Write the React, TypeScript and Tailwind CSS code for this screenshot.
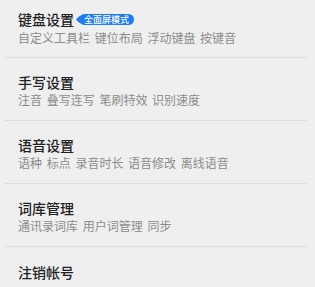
import React from 'react';

const rows = [
  { title: '键盘设置', sub: '自定义工具栏 键位布局 浮动键盘 按键音', badge: '全面屏模式' },
  { title: '手写设置', sub: '注音 叠写连写 笔刷特效 识别速度' },
  { title: '语音设置', sub: '语种 标点 录音时长 语音修改 离线语音' },
  { title: '词库管理', sub: '通讯录词库 用户词管理 同步' },
];

export default function App() {
  return (
    <div
      className="w-[315px] h-[287px] overflow-hidden bg-[#efefef]"
      style={{ fontFamily: '"Noto Sans CJK SC", "Noto Sans", sans-serif' }}
    >
      {rows.map((row, i) => (
        <div key={row.title}>
          <div className={`pl-[18px] pr-4 ${i === 0 ? 'pt-[9px] pb-[11px]' : 'pt-[14px] pb-[12px]'}`}>
            <div className="flex items-center h-[20px]">
              <span className="text-[14px] leading-[20px] font-medium text-[#222]">{row.title}</span>
              {row.badge && (
                <span className="relative ml-[5px] flex items-center">
                  <span className="absolute left-[-2px] top-[3px] w-[5px] h-[5px] rotate-45 bg-[#1d7cf2]" />
                  <span className="relative h-[11px] px-[5px] rounded-full bg-[#1d7cf2] text-white text-[9px] leading-[11px] font-medium">
                    {row.badge}
                  </span>
                </span>
              )}
            </div>
            <div
              className={`h-[16px] text-[12px] leading-[16px] text-[#8c8c8c] whitespace-nowrap [word-spacing:2px] ${
                i === 0 ? 'mt-px' : ''
              }`}
            >
              {row.sub}
            </div>
          </div>
          <div className="h-px ml-1 mr-2 bg-[#dedede]" />
        </div>
      ))}
      <div className="pl-[18px] pt-[12px]">
        <span className="text-[14px] leading-[20px] font-medium text-[#222]">注销帐号</span>
      </div>
    </div>
  );
}
